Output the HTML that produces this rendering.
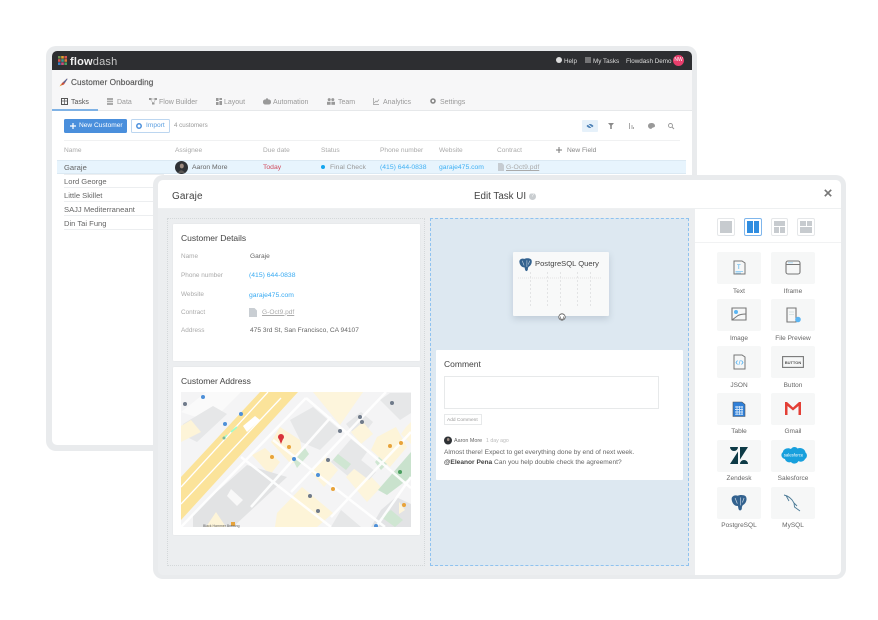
<!DOCTYPE html>
<html><head><meta charset="utf-8"><style>
*{box-sizing:border-box}
html,body{margin:0;padding:0;background:#fff}
#r{position:relative;width:878px;height:620px;overflow:hidden;font-family:"Liberation Sans",sans-serif;color:#555;background:#fff;filter:blur(.35px)}
.a{position:absolute;white-space:nowrap}
.t{position:absolute;white-space:nowrap;line-height:10px;margin-top:1px}
.tile{position:absolute;width:44px;height:32px;background:#f6f7f7;border-radius:2px}
.lab{position:absolute;width:60px;text-align:center;font-size:6.5px;color:#666;line-height:8px;margin-top:1px}
svg{position:absolute;overflow:visible}
</style></head><body><div id="r">
<!-- back window -->
<div class="a" style="left:46px;top:46px;width:651px;height:405px;background:#e9ebed;border-radius:10px"></div>
<div class="a" style="left:52px;top:51px;width:640px;height:394px;background:#fff;border-radius:5px;overflow:hidden">
 <div class="a" style="left:0;top:0;width:640px;height:19px;background:#2d2e31"></div>
 <div class="a" style="left:0;top:19px;width:640px;height:41px;background:#f7f7f8;border-bottom:1px solid #e6e8ea"></div>
 <div class="a" style="left:0;top:58px;width:46px;height:2px;background:#7fb2e5"></div>
</div>
<svg style="left:58px;top:56px" width="9" height="9"><rect x="0" y="0" width="2.6" height="2.6" fill="#6b8e4e"/><rect x="3.2" y="0" width="2.6" height="2.6" fill="#e0a030"/><rect x="6.4" y="0" width="2.6" height="2.6" fill="#d9534f"/><rect x="0" y="3.2" width="2.6" height="2.6" fill="#d9534f"/><rect x="3.2" y="3.2" width="2.6" height="2.6" fill="#3f9c8f"/><rect x="6.4" y="3.2" width="2.6" height="2.6" fill="#e07b39"/><rect x="0" y="6.4" width="2.6" height="2.6" fill="#3a7fc4"/><rect x="3.2" y="6.4" width="2.6" height="2.6" fill="#c94f7c"/><rect x="6.4" y="6.4" width="2.6" height="2.6" fill="#4b9e5f"/></svg>
<div class="t" style="left:70px;top:56px;font-size:11px;font-weight:bold;color:#f2f2f2;letter-spacing:.2px">flow<span style="font-weight:normal;color:#c9c9c9">dash</span></div>
<svg style="left:556px;top:57px" width="6" height="6"><circle cx="3" cy="3" r="3" fill="#ddd"/></svg>
<div class="t" style="left:564px;top:55.500px;font-size:6.3px;color:#ddd">Help</div>
<svg style="left:585px;top:57px" width="6" height="6"><path d="M0 1h6M0 3h6M0 5h6" stroke="#bbb" stroke-width="1"/></svg>
<div class="t" style="left:593px;top:55.500px;font-size:6.3px;color:#ddd">My Tasks</div>
<div class="t" style="left:626px;top:55.500px;font-size:6.3px;color:#ddd">Flowdash Demo</div>
<div class="a" style="left:673px;top:55px;width:11px;height:11px;border-radius:50%;background:#e83e6c;color:#fff;font-size:5px;line-height:11px;text-align:center">NW</div>

<svg style="left:59px;top:78px" width="9" height="9"><path d="M1 8L3 5L8 0.5L8.5 1L5 6.5Z" fill="#c9503f"/><path d="M4 4.5L8 .5L8.5 1L5.5 5Z" fill="#4a6fa5"/><path d="M0.5 8.5L2 6L3 7Z" fill="#e8a33a"/></svg>
<div class="t" style="left:71px;top:77px;font-size:8.2px;color:#555;letter-spacing:.1px;-webkit-text-stroke:.15px #555">Customer Onboarding</div>

<!-- tabs -->
<svg style="left:61px;top:98px" width="7" height="7"><rect x=".5" y=".5" width="6" height="6" fill="none" stroke="#555"/><path d="M0 3h7M3.5 0v7" stroke="#555" stroke-width=".7"/></svg>
<div class="t" style="left:71px;top:96.500px;font-size:7px;color:#555">Tasks</div>
<svg style="left:107px;top:98px" width="6" height="7"><rect width="6" height="7" fill="#aaa"/><path d="M0 2.3h6M0 4.6h6" stroke="#f7f7f8" stroke-width=".7"/></svg>
<div class="t" style="left:117px;top:96.500px;font-size:7px;color:#999">Data</div>
<svg style="left:149px;top:98px" width="8" height="7"><rect x="0" y="0" width="2.5" height="2" fill="#999"/><rect x="5.5" y="0" width="2.5" height="2" fill="#999"/><rect x="3" y="4.5" width="2.5" height="2" fill="#999"/><path d="M2 1h4M1.5 1.5L4 5M6.5 1.5L4.5 5" stroke="#999" stroke-width=".5"/></svg>
<div class="t" style="left:159px;top:96.500px;font-size:7px;color:#999">Flow Builder</div>
<svg style="left:216px;top:98px" width="6" height="7"><rect width="2.6" height="3" fill="#999"/><rect x="3.4" width="2.6" height="2" fill="#999"/><rect y="4" width="2.6" height="3" fill="#999"/><rect x="3.4" y="3" width="2.6" height="4" fill="#999"/></svg>
<div class="t" style="left:224px;top:96.500px;font-size:7px;color:#999">Layout</div>
<svg style="left:263px;top:98px" width="8" height="7"><rect x="0" y="1.5" width="8" height="5" rx="2.2" fill="#999"/><circle cx="4" cy="1.4" r="1.2" fill="#999"/></svg>
<div class="t" style="left:273px;top:96.500px;font-size:7px;color:#999">Automation</div>
<svg style="left:327px;top:98px" width="8" height="7"><circle cx="2.2" cy="1.6" r="1.5" fill="#999"/><circle cx="5.8" cy="1.6" r="1.5" fill="#999"/><rect x="0" y="3.8" width="3.6" height="3" fill="#999"/><rect x="4.4" y="3.8" width="3.6" height="3" fill="#999"/></svg>
<div class="t" style="left:338px;top:96.500px;font-size:7px;color:#999">Team</div>
<svg style="left:373px;top:98px" width="6" height="7"><path d="M.5 0v6.5H6M1.2 5L3 3l1 1 2-2.5" fill="none" stroke="#999" stroke-width=".7"/></svg>
<div class="t" style="left:383px;top:96.500px;font-size:7px;color:#999">Analytics</div>
<svg style="left:430px;top:98px" width="6" height="6"><circle cx="3" cy="3" r="2" fill="none" stroke="#888" stroke-width="1.6"/></svg>
<div class="t" style="left:440px;top:96.500px;font-size:7px;color:#999">Settings</div>

<!-- toolbar -->
<div class="a" style="left:64px;top:119px;width:63px;height:14px;background:#4a8fdc;border-radius:1.5px"></div>
<svg style="left:70px;top:123px" width="6" height="6"><path d="M3 0v6M0 3h6" stroke="#fff" stroke-width="1.2"/></svg>
<div class="t" style="left:79px;top:120px;font-size:6.6px;color:#fff">New Customer</div>
<div class="a" style="left:131px;top:119px;width:39px;height:14px;background:#fff;border:1px solid #bcd6f0;border-radius:1.5px"></div>
<svg style="left:136px;top:123px" width="6" height="6"><circle cx="3" cy="3" r="2.2" fill="none" stroke="#4a8fdc" stroke-width="1.5"/></svg>
<div class="t" style="left:146px;top:120px;font-size:6.6px;color:#5a9ee0">Import</div>
<div class="t" style="left:174px;top:120px;font-size:6.2px;color:#999">4 customers</div>
<div class="a" style="left:582px;top:120px;width:16px;height:12px;background:#e6f1fa;border-radius:1px"></div>
<svg style="left:586px;top:123px" width="8" height="6"><path d="M.5 3Q4 -1 7.5 3Q4 7 .5 3Z" fill="#4a7fb5"/><path d="M1 .5L7 5.5" stroke="#e6f1fa" stroke-width=".9"/></svg>
<svg style="left:608px;top:123px" width="6" height="6"><path d="M0 0h6L3.8 2.5V6H2.2V2.5Z" fill="#8a8a8a"/></svg>
<svg style="left:628px;top:123px" width="6" height="6"><path d="M1.5 0v6M4 2v4M5.5 4v2" stroke="#aaa" stroke-width="1"/></svg>
<svg style="left:648px;top:123px" width="7" height="6"><path d="M3.5 0C1 0 0 1.5 0 3s1.5 3 3.5 3c0-2 3.5-1 3.500-3S5.5 0 3.5 0Z" fill="#999"/></svg>
<svg style="left:668px;top:123px" width="6" height="6"><circle cx="2.5" cy="2.5" r="2" fill="none" stroke="#999" stroke-width=".9"/><path d="M4 4l2 2" stroke="#999"/></svg>
<div class="a" style="left:64px;top:140px;width:616px;height:1px;background:#f0f1f2"></div>

<!-- table -->
<div class="t" style="left:64px;top:145px;font-size:6.6px;color:#aaa">Name</div>
<div class="t" style="left:175px;top:145px;font-size:6.6px;color:#aaa">Assignee</div>
<div class="t" style="left:263px;top:145px;font-size:6.6px;color:#aaa">Due date</div>
<div class="t" style="left:321px;top:145px;font-size:6.6px;color:#aaa">Status</div>
<div class="t" style="left:380px;top:145px;font-size:6.6px;color:#aaa">Phone number</div>
<div class="t" style="left:439px;top:145px;font-size:6.6px;color:#aaa">Website</div>
<div class="t" style="left:497px;top:145px;font-size:6.6px;color:#aaa">Contract</div>
<svg style="left:556px;top:147px" width="6" height="6"><path d="M3 0v6M0 3h6" stroke="#777" stroke-width="1"/></svg>
<div class="t" style="left:567px;top:145px;font-size:6.6px;color:#888">New Field</div>
<div class="a" style="left:57px;top:160px;width:629px;height:14px;background:#e7f4fd;border-top:1px solid #dbe9f3;border-bottom:1px solid #dbe9f3"></div>
<div class="t" style="left:64px;top:161.500px;font-size:7.6px;color:#666">Garaje</div>
<svg style="left:175px;top:161px" width="13" height="13"><circle cx="6.5" cy="6.5" r="6.5" fill="#2e3135"/><ellipse cx="6.8" cy="5" rx="2" ry="2.4" fill="#9b8a80"/><path d="M3 12Q6 6.5 10 12Z" fill="#5b5754"/></svg>
<div class="t" style="left:192px;top:161.500px;font-size:6.8px;color:#666">Aaron More</div>
<div class="t" style="left:263px;top:161.500px;font-size:6.8px;color:#d0495c">Today</div>
<div class="a" style="left:321px;top:165px;width:4px;height:4px;border-radius:50%;background:#12a5ee"></div>
<div class="t" style="left:330px;top:161.500px;font-size:6.8px;color:#999">Final Check</div>
<div class="t" style="left:380px;top:161.500px;font-size:6.8px;color:#3fb0f4">(415) 644-0838</div>
<div class="t" style="left:439px;top:162px;font-size:6.8px;color:#3fb0f4">garaje475.com</div>
<svg style="left:498px;top:163px" width="6" height="8"><path d="M0 0h4l2 2v6H0Z" fill="#c6ccd2"/></svg>
<div class="t" style="left:506px;top:162px;font-size:6.8px;color:#aaa;text-decoration:underline">G-Oct9.pdf</div>
<div class="t" style="left:64px;top:175.500px;font-size:7.6px;color:#666">Lord George</div>
<div class="t" style="left:64px;top:189.500px;font-size:7.6px;color:#666">Little Skillet</div>
<div class="t" style="left:64px;top:203.500px;font-size:7.6px;color:#666">SAJJ Mediterraneant</div>
<div class="t" style="left:64px;top:217.500px;font-size:7.6px;color:#666">Din Tai Fung</div>
<div class="a" style="left:64px;top:174px;width:100px;height:1px;background:#eceef0"></div>
<div class="a" style="left:64px;top:187px;width:100px;height:1px;background:#eceef0"></div>
<div class="a" style="left:64px;top:201px;width:100px;height:1px;background:#eceef0"></div>
<div class="a" style="left:64px;top:215px;width:100px;height:1px;background:#eceef0"></div>
<div class="a" style="left:64px;top:229px;width:100px;height:1px;background:#eceef0"></div>

<!-- front window -->
<div class="a" style="left:153px;top:175px;width:693px;height:404px;background:#e9ebed;border-radius:10px"></div>
<div class="a" style="left:158px;top:180px;width:683px;height:395px;background:#eceef0;border-radius:5px;overflow:hidden">
 <div class="a" style="left:0;top:0;width:683px;height:29px;background:#fff;border-bottom:1px solid #eef0f1"></div>
 <div class="a" style="left:537px;top:29px;width:146px;height:366px;background:#fff"></div>
 <div class="a" style="left:537px;top:62px;width:146px;height:1px;background:#f1f2f3"></div>
</div>
<div class="t" style="left:172px;top:190.500px;font-size:10px;color:#444;letter-spacing:.1px">Garaje</div>
<div class="t" style="left:474px;top:190.500px;font-size:9.800px;color:#444">Edit Task UI</div>
<div class="a" style="left:529px;top:193px;width:7px;height:7px;border-radius:50%;background:#c9cdd0;color:#fff;font-size:5px;line-height:7px;text-align:center">?</div>
<svg style="left:824px;top:189px" width="8" height="8"><path d="M.8 .8L7.2 7.2M7.2 .8L.8 7.2" stroke="#777" stroke-width="1.7"/></svg>

<!-- left zone -->
<div class="a" style="left:167px;top:218px;width:258px;height:348px;border:1px dotted #d4d8da"></div>
<div class="a" style="left:173px;top:224px;width:247px;height:137px;background:#fff;border-radius:1px;box-shadow:0 0 2px rgba(0,0,0,.05)"></div>
<div class="t" style="left:181px;top:231.500px;font-size:8.500px;color:#444">Customer Details</div>
<div class="t" style="left:181px;top:251px;font-size:6.4px;color:#aaa">Name</div>
<div class="t" style="left:250px;top:251px;font-size:6.6px;color:#666">Garaje</div>
<div class="t" style="left:181px;top:270px;font-size:6.4px;color:#aaa">Phone number</div>
<div class="t" style="left:249px;top:270px;font-size:6.8px;color:#38aaf2">(415) 644-0838</div>
<div class="t" style="left:181px;top:289px;font-size:6.4px;color:#aaa">Website</div>
<div class="t" style="left:249px;top:289.500px;font-size:6.8px;color:#38aaf2">garaje475.com</div>
<div class="t" style="left:181px;top:307px;font-size:6.4px;color:#aaa">Contract</div>
<svg style="left:249px;top:308px" width="8" height="9"><path d="M0 0h5.5L8 2.5V9H0Z" fill="#c9ced3"/></svg>
<div class="t" style="left:262px;top:306.500px;font-size:6.6px;color:#aaa;text-decoration:underline">G-Oct9.pdf</div>
<div class="t" style="left:181px;top:325px;font-size:6.4px;color:#aaa">Address</div>
<div class="t" style="left:250px;top:325px;font-size:6.6px;color:#666">475 3rd St, San Francisco, CA 94107</div>

<div class="a" style="left:173px;top:367px;width:247px;height:168px;background:#fff;border-radius:1px;box-shadow:0 0 2px rgba(0,0,0,.05)"></div>
<div class="t" style="left:181px;top:375px;font-size:8.500px;color:#444">Customer Address</div>

<!-- map -->
<svg style="left:181px;top:392px" width="230" height="135" viewBox="0 0 230 135">
<defs><clipPath id="c"><rect width="230" height="135"/></clipPath></defs>
<g clip-path="url(#c)">
<rect width="230" height="135" fill="#f4f4f5"/>
<!-- top-left blocks -->
<path d="M0 20L25 0H60L30 30Z" fill="#fafafa"/>
<path d="M2 32L32 14L46 22L16 50L0 42Z" fill="#e6e7e8"/>
<path d="M0 34L10 28L20 40L0 50Z" fill="#fdf4d8"/>
<!-- highway -->
<path d="M79 0H117L0 128V85Z" fill="#fbe39a"/>
<path d="M0 95L87 0M0 112L100 6" stroke="#fff" stroke-width="1.300" fill="none"/>
<path d="M62 34L74 24L79 28L66 40Z" fill="#fff"/>
<path d="M42 47L46 43M50 40L56 35" stroke="#9fc" stroke-width="1.500"/>
<!-- blocks centre / right -->
<path d="M132 0H182L159 33Z" fill="#fdf5dc"/>
<path d="M109 28L132 15L159 38L139 58L120 50Z" fill="#e6e7e8"/>
<path d="M99 35L119 48L122 66L110 72L90 50Z" fill="#fdf3d6"/>
<path d="M71 63L84 56L99 70L89 83Z" fill="#fdf3d6"/>
<path d="M112 68L124 56L128 62L116 76Z" fill="#cfe6d2"/>
<path d="M12 121L66 73L106 85L52 135H12Z" fill="#e2e3e4"/>
<path d="M50 97L62 108L56 114L46 104Z" fill="#f8f8f8"/>
<path d="M96 121L121 95L152 121L136 135H94Z" fill="#fdf4d8"/>
<path d="M130 80L145 65L157 78L143 95Z" fill="#fdf5dc"/>
<path d="M150 70L170 47L186 60L168 85Z" fill="#e6e7e8"/>
<path d="M157 62L170 72L165 78L152 68Z" fill="#cfe6d2"/>
<path d="M165 32L178 48L192 30L180 20Z" fill="#e6e7e8"/>
<path d="M170 40L182 30L192 42L180 52Z" fill="#fdf5dc"/>
<path d="M196 45L215 35L226 55L209 75L190 58Z" fill="#fdf4d8"/>
<path d="M198 65L206 72L200 78L194 70Z" fill="#cfe6d2"/>
<path d="M165 85L178 72L200 95L186 110Z" fill="#fdf5dc"/>
<path d="M180 68L195 80L188 88L172 76Z" fill="#e6e7e8"/>
<path d="M199 8L209 1H230V21L219 28Z" fill="#e6e7e8"/>
<path d="M225 35L230 30V52L220 42Z" fill="#fdf5dc"/>
<path d="M197 98L230 60V85L206 103Z" fill="#c9e2cd"/>
<path d="M200 118L215 105L230 112V135H190Z" fill="#e2e3e5"/>
<path d="M210 118L222 128L214 135L200 125Z" fill="#cfe6d2"/>
<path d="M218 110L224 118L218 122Z" fill="#fdf5dc"/>
<path d="M160 118L180 135H150Z" fill="#e6e7e8"/>
<path d="M35 120L45 135H25Z" fill="#fdf4d8"/>
<!-- streets -->
<path d="M0 135L125 6M60 65L150 135M92 48L204 135M125 6L230 96M150 25L70 115M205 0L110 100M230 40L150 125M230 85L195 135" stroke="#fff" stroke-width="2.500" fill="none" opacity=".9"/>
<!-- pins -->
<circle cx="100" cy="45" r="3" fill="#d8333a"/><path d="M98 47L100 52L102 47Z" fill="#d8333a"/>
<circle cx="108" cy="55" r="2" fill="#e8a33a"/><circle cx="91" cy="65" r="2" fill="#e8a33a"/><circle cx="152" cy="97" r="2" fill="#e8a33a"/><circle cx="209" cy="54" r="2" fill="#e8a33a"/><circle cx="220" cy="51" r="2" fill="#e8a33a"/><circle cx="223" cy="113" r="2" fill="#e8a33a"/>
<circle cx="129" cy="104" r="2" fill="#6f7a8a"/><circle cx="137" cy="119" r="2" fill="#6f7a8a"/><circle cx="147" cy="68" r="2" fill="#6f7a8a"/><circle cx="137" cy="83" r="2" fill="#4e90d8"/><circle cx="159" cy="39" r="2" fill="#6f7a8a"/><circle cx="181" cy="30" r="2" fill="#6f7a8a"/>
<circle cx="179" cy="25" r="2" fill="#6f7a8a"/><circle cx="211" cy="11" r="2" fill="#6f7a8a"/><circle cx="22" cy="5" r="2" fill="#4e90d8"/><circle cx="4" cy="12" r="2" fill="#6f7a8a"/><circle cx="60" cy="22" r="2" fill="#4e90d8"/><circle cx="44" cy="32" r="2" fill="#4e90d8"/><circle cx="195" cy="134" r="2" fill="#4e90d8"/><circle cx="219" cy="80" r="2" fill="#4a9e5f"/><circle cx="113" cy="67" r="2" fill="#4e90d8"/><circle cx="43" cy="46" r="1.500" fill="#7bb89a"/>
<rect x="50" y="130" width="4" height="4" fill="#e8a33a"/>
</g></svg>
<div class="t" style="left:203px;top:520px;font-size:3.500px;color:#666">Black Hammer Brewing</div>

<!-- blue zone -->
<div class="a" style="left:430px;top:218px;width:259px;height:348px;background:#dde8f1;border:1px dashed #8fc2ef"></div>
<div class="a" style="left:513px;top:252px;width:96px;height:64px;background:#f8f9f9;border-radius:1px;box-shadow:0 3px 7px rgba(60,80,100,.18)"></div>
<svg style="left:518px;top:257px" width="15" height="15" viewBox="0 0 16 15"><path d="M1.500 5C1 2 4 .5 7 1.500C8.500 .7 12 .5 14 2C15.500 4 14.500 8 12 9.500C11 10 10.500 11 10.500 13C10 15 8 15 7.500 13L7 10.500C5 11 2 9 1.500 5Z" fill="#33628f"/><path d="M4.500 3.500L6.500 8.500M9.500 3V10M12.500 3.500L11 7.500" stroke="#cfdbe6" stroke-width=".6"/></svg>
<div class="t" style="left:535px;top:258px;font-size:7.600px;color:#444">PostgreSQL Query</div>
<svg style="left:518px;top:272px" width="86" height="34"><path d="M0 6H84" stroke="#ddd" stroke-width=".8" stroke-dasharray="1 1"/><path d="M12.500 0V34M29.500 0V34M42.500 0V34M59.500 0V34M72.500 0V34" stroke="#dedfe0" stroke-width=".8" stroke-dasharray="2 2"/></svg>
<svg style="left:558px;top:313px" width="8" height="8"><circle cx="4" cy="4" r="3.200" fill="#fff" stroke="#555" stroke-width=".8"/><path d="M2.500 3.500V5.500L4 6.500L5.500 5.500V3.500" fill="none" stroke="#555" stroke-width=".6"/></svg>

<div class="a" style="left:436px;top:350px;width:247px;height:130px;background:#fff;border-radius:1px"></div>
<div class="t" style="left:444px;top:358px;font-size:8.500px;color:#444">Comment</div>
<div class="a" style="left:444px;top:376px;width:215px;height:33px;background:#fff;border:1px solid #e7e9ea"></div>
<div class="a" style="left:444px;top:414px;width:38px;height:11px;background:#fff;border:1px solid #e7e9ea"></div>
<div class="t" style="left:447px;top:415px;font-size:4.800px;color:#999">Add Comment</div>
<svg style="left:444px;top:436px" width="8" height="9"><circle cx="4" cy="4.500" r="4" fill="#2e3135"/><ellipse cx="4.200" cy="3.500" rx="1.300" ry="1.500" fill="#9b8a80"/></svg>
<div class="t" style="left:454px;top:435px;font-size:5.400px;color:#666">Aaron More</div>
<div class="t" style="left:486px;top:435px;font-size:5.200px;color:#bbb">1 day ago</div>
<div class="t" style="left:444px;top:447px;font-size:6.600px;color:#666">Almost there! Expect to get everything done by end of next week.</div>
<div class="t" style="left:444px;top:457px;font-size:6.600px;color:#666"><b style="color:#444">@Eleanor Pena</b> Can you help double check the agreement?</div>

<!-- layout buttons -->
<div class="a" style="left:717px;top:218px;width:18px;height:18px;background:#fff;border:1px solid #e5e7e9;border-radius:2px"></div>
<div class="a" style="left:720px;top:221px;width:12px;height:12px;background:#c7cbcf"></div>
<div class="a" style="left:744px;top:218px;width:18px;height:18px;background:#fff;border:1px solid #7fb6ec;border-radius:2px"></div>
<div class="a" style="left:747px;top:221px;width:5.500px;height:12px;background:#2f8de0"></div>
<div class="a" style="left:753.500px;top:221px;width:5.500px;height:12px;background:#2f8de0"></div>
<div class="a" style="left:771px;top:218px;width:17px;height:18px;background:#fff;border:1px solid #e5e7e9;border-radius:2px"></div>
<div class="a" style="left:774px;top:221px;width:11px;height:5px;background:#c7cbcf"></div>
<div class="a" style="left:774px;top:227px;width:5px;height:6px;background:#c7cbcf"></div>
<div class="a" style="left:780px;top:227px;width:5px;height:6px;background:#c7cbcf"></div>
<div class="a" style="left:797px;top:218px;width:18px;height:18px;background:#fff;border:1px solid #e5e7e9;border-radius:2px"></div>
<div class="a" style="left:800px;top:221px;width:5.500px;height:5px;background:#c7cbcf"></div>
<div class="a" style="left:806.500px;top:221px;width:5.500px;height:5px;background:#c7cbcf"></div>
<div class="a" style="left:800px;top:227px;width:12px;height:6px;background:#c7cbcf"></div>

<!-- tiles -->
<div class="tile" style="left:717px;top:252px"></div><div class="tile" style="left:771px;top:252px"></div>
<div class="tile" style="left:717px;top:299px"></div><div class="tile" style="left:771px;top:299px"></div>
<div class="tile" style="left:717px;top:346px"></div><div class="tile" style="left:771px;top:346px"></div>
<div class="tile" style="left:717px;top:393px"></div><div class="tile" style="left:771px;top:393px"></div>
<div class="tile" style="left:717px;top:440px"></div><div class="tile" style="left:771px;top:440px"></div>
<div class="tile" style="left:717px;top:487px"></div><div class="tile" style="left:771px;top:487px"></div>
<div class="lab" style="left:709px;top:287px">Text</div><div class="lab" style="left:763px;top:287px">Iframe</div>
<div class="lab" style="left:709px;top:334px">Image</div><div class="lab" style="left:763px;top:334px">File Preview</div>
<div class="lab" style="left:709px;top:381px">JSON</div><div class="lab" style="left:763px;top:381px">Button</div>
<div class="lab" style="left:709px;top:427px">Table</div><div class="lab" style="left:763px;top:427px">Gmail</div>
<div class="lab" style="left:709px;top:474px">Zendesk</div><div class="lab" style="left:763px;top:474px">Salesforce</div>
<div class="lab" style="left:709px;top:521px">PostgreSQL</div><div class="lab" style="left:763px;top:521px">MySQL</div>

<svg style="left:732px;top:260px" width="14" height="16"><path d="M2 1H10L13 3V14H2Z" fill="none" stroke="#777" stroke-width="1"/><text x="5" y="9" font-size="6" fill="#35a5ee" font-family="Liberation Sans">T</text><path d="M3.500 11.500H11M3.500 13H9" stroke="#7cc6f5" stroke-width=".8"/></svg>
<svg style="left:785px;top:260px" width="16" height="15"><rect x="1" y="1" width="14" height="13" rx="2" fill="none" stroke="#777" stroke-width="1.100"/><path d="M1 4.500H15" stroke="#777" stroke-width="1"/><path d="M3 2.800H8" stroke="#9fd3f5" stroke-width=".8"/></svg>
<svg style="left:731px;top:307px" width="16" height="15"><path d="M1 1H15V13H1Z" fill="none" stroke="#777" stroke-width="1.100"/><circle cx="5" cy="5" r="2" fill="#5bb5f2"/><path d="M1 13L7 8.500Q10 7 15 7" fill="none" stroke="#777" stroke-width="1"/></svg>
<svg style="left:786px;top:307px" width="16" height="16"><path d="M1 1H10V15H1Z" fill="none" stroke="#777" stroke-width="1.100"/><path d="M3 5H8M3 7.500H8" stroke="#cdd" stroke-width=".7"/><circle cx="12" cy="12.500" r="2.800" fill="#5bb5f2"/></svg>
<svg style="left:732px;top:354px" width="14" height="16"><path d="M2 1H10L13 3V15H2Z" fill="none" stroke="#777" stroke-width="1"/><path d="M5.500 6.500L4 8.500L5.500 10.500M9.500 6.500L11 8.500L9.500 10.500" fill="none" stroke="#4fb1f2" stroke-width=".8"/><path d="M8.300 6L6.800 11" stroke="#4fb1f2" stroke-width=".6"/></svg>
<svg style="left:782px;top:356px" width="22" height="12"><rect x=".6" y=".6" width="20.800" height="10.800" fill="none" stroke="#777" stroke-width="1.100"/><text x="11" y="7.800" text-anchor="middle" font-size="4" font-weight="bold" fill="#555" font-family="Liberation Sans">BUTTON</text></svg>
<svg style="left:732px;top:401px" width="13" height="16"><path d="M1 1H10L13 3.500V15.500H1Z" fill="#2f7fd8" stroke="#555" stroke-width=".6"/><path d="M3 6H11M3 8.500H11M3 11H11M3 13.200H11M5 5V14M7.500 5V14M10 5V14" stroke="#cfe4f8" stroke-width=".9"/></svg>
<svg style="left:784px;top:401px" width="18" height="14"><path d="M1 14V1H3L9 6.500L15 1H17V14H14.500V5L9 9.500L3.500 5V14Z" fill="#e33f36"/></svg>
<svg style="left:730px;top:447px" width="18" height="17"><path d="M8 4.500V17H0ZM8 0A4 4 0 0 1 0 0ZM10 12.500V0H18ZM10 17A4 4 0 0 1 18 17Z" fill="#0d3a46"/></svg>
<svg style="left:780px;top:446px" width="27" height="19" viewBox="0 0 27 19"><path d="M11 3C12.500 .5 16 .5 17.500 2.500C21 1 25 3 25.500 6.500C27.500 8 27.500 11.500 25 13C24 15.500 20.500 16.500 18.500 15C17 18 13 18.500 11 16C8.500 17 5.500 15.500 5 13C1.500 12.500 0 8 3 6C3 3 8 1 11 3Z" fill="#18a0dd"/><text x="13.500" y="10.500" text-anchor="middle" font-size="4.300" fill="#fff" font-family="Liberation Sans">salesforce</text></svg>
<svg style="left:730px;top:494px" width="18" height="17" viewBox="0 0 16 15"><path d="M1.500 5C1 2 4 .5 7 1.500C8.500 .7 12 .5 14 2C15.500 4 14.500 8 12 9.500C11 10 10.500 11 10.500 13C10 15 8 15 7.500 13L7 10.500C5 11 2 9 1.500 5Z" fill="#33628f"/><path d="M4.500 3.500L6.500 8.500M9.500 3V10M12.500 3.500L11 7.500" stroke="#cfdbe6" stroke-width=".6"/></svg>
<svg style="left:783px;top:494px" width="19" height="18"><path d="M1 1C6 2 9 5 11 9L11.500 13L17 17M11 9L14 12M3 1.500L6 7" fill="none" stroke="#4b7a96" stroke-width=".9"/></svg>
</div></body></html>
